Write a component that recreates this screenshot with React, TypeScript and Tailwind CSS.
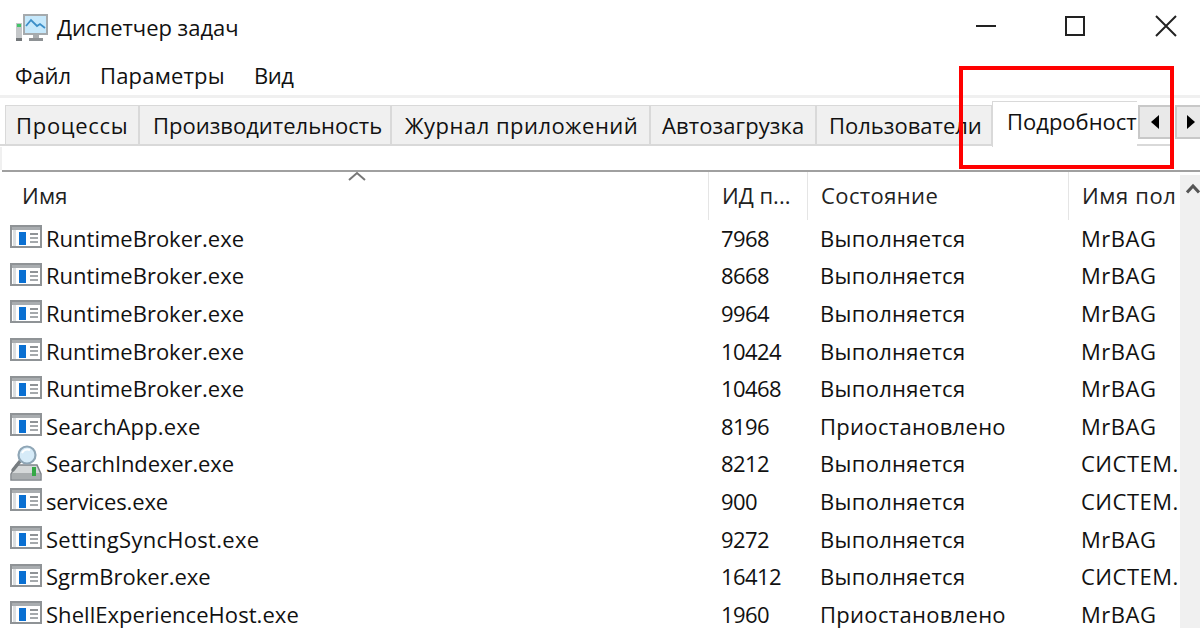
const font = { fontFamily: '"Open Sans", "Noto Sans", sans-serif' };

const rows: [string, string, string, string, string, boolean?][] = [
  ["RuntimeBroker.exe", "tracking-[0px]", "7968", "Выполняется", "MrBAG"],
  ["RuntimeBroker.exe", "tracking-[0px]", "8668", "Выполняется", "MrBAG"],
  ["RuntimeBroker.exe", "tracking-[0px]", "9964", "Выполняется", "MrBAG"],
  ["RuntimeBroker.exe", "tracking-[0px]", "10424", "Выполняется", "MrBAG"],
  ["RuntimeBroker.exe", "tracking-[0px]", "10468", "Выполняется", "MrBAG"],
  ["SearchApp.exe", "tracking-[0.15px]", "8196", "Приостановлено", "MrBAG"],
  ["SearchIndexer.exe", "tracking-[-0.12px]", "8212", "Выполняется", "СИСТЕМ.", true],
  ["services.exe", "tracking-[-0.15px]", "900", "Выполняется", "СИСТЕМ."],
  ["SettingSyncHost.exe", "tracking-[0.28px]", "9272", "Выполняется", "MrBAG"],
  ["SgrmBroker.exe", "tracking-[0px]", "16412", "Выполняется", "СИСТЕМ."],
  ["ShellExperienceHost.exe", "tracking-[0.05px]", "1960", "Приостановлено", "MrBAG"],
];

const tabs: [string, string, string][] = [
  ["Процессы", "w-[134px] pl-[10px] tracking-[0.7px]", "p"],
  ["Производительность", "w-[252px] pl-[13px] tracking-[0px]", "q"],
  ["Журнал приложений", "w-[259px] pl-[13px] tracking-[0.5px]", "r"],
  ["Автозагрузка", "w-[166px] pl-[11px] tracking-[0.1px]", "s"],
  ["Пользователи", "w-[176px] pl-[12px] tracking-[0px]", "t"],
];

function ExeIcon() {
  return (
    <svg width="32" height="23" viewBox="0 0 32 23" className="shrink-0 -mt-[2px]">
      <rect x="1" y="1" width="30" height="21" fill="#fff" stroke="#8f9396" strokeWidth="2" />
      <rect x="2" y="2" width="28" height="3" fill="#a9adb0" />
      <rect x="3" y="5" width="3" height="16" fill="#dcdfe1" />
      <rect x="9" y="7" width="7" height="13" fill="#0a70d2" />
      <rect x="20" y="8" width="8" height="2" fill="#8f9396" />
      <rect x="20" y="12" width="8" height="2" fill="#a5a9ac" />
      <rect x="20" y="16" width="8" height="2" fill="#a5a9ac" />
    </svg>
  );
}

function IndexerIcon() {
  return (
    <svg width="32" height="36" viewBox="0 0 32 36" className="shrink-0">
      <path d="M1 29 L6 20 H27 L31 29 V35 H1 Z" fill="#d5d8d9" stroke="#80858a" strokeWidth="1.5" />
      <path d="M2 28 H30 V34 H2 Z" fill="#a9adaf" />
      <rect x="22" y="22" width="4" height="9" fill="#35a845" />
      <path d="M11 15 L3 25" stroke="#777c80" strokeWidth="3.5" strokeLinecap="round" />
      <circle cx="17" cy="10" r="8.5" fill="#d6ebf8" stroke="#8fa6b6" strokeWidth="2.2" />
      <path d="M12 8 A6 6 0 0 1 20 5" fill="none" stroke="#fff" strokeWidth="2" />
    </svg>
  );
}

function AppIcon() {
  return (
    <svg width="33" height="28" viewBox="0 0 33 28" className="shrink-0">
      <rect x="1" y="9" width="6" height="18" fill="#c4c7c9" />
      <rect x="2" y="10" width="4" height="3" fill="#45c46a" />
      <rect x="1" y="24" width="6" height="3" fill="#73777a" />
      <rect x="9" y="1" width="23" height="19" fill="#c6e8fb" stroke="#a5aaad" strokeWidth="2" />
      <path d="M11 12 L16 6 L22 12 L25 10 L30 14" fill="none" stroke="#3c8fc8" strokeWidth="1.8" />
      <rect x="18" y="21" width="6" height="3" fill="#a9adb0" />
      <rect x="14" y="24" width="14" height="3" fill="#8e9295" />
    </svg>
  );
}

export default function App() {
  return (
    <div className="relative w-[1200px] h-[628px] overflow-hidden bg-white text-[#111] text-[22px] leading-[30px]" style={font}>
      <div className="h-[55px] flex items-start">
        <div className="ml-[15px] mt-[14px]"><AppIcon /></div>
        <div className="ml-[9px] mt-[12px] tracking-[-0.02px]">Диспетчер задач</div>
        <div className="ml-auto flex items-start">
          <div className="w-[20px] h-[2px] bg-[#222] mt-[25px] mr-[69px]" />
          <div className="w-[20px] h-[20px] border-2 border-[#222] mt-[16px] mr-[70px]" />
          <svg width="22" height="22" viewBox="0 0 22 22" className="mt-[15px] mr-[23px]">
            <path d="M1 1 L21 21 M21 1 L1 21" stroke="#222" strokeWidth="2" />
          </svg>
        </div>
      </div>

      <div className="h-[40px] flex items-center pl-[15px] gap-[29px]">
        <span className="tracking-[-0.1px]">Файл</span>
        <span className="tracking-[0.2px]">Параметры</span>
        <span className="tracking-[-0.35px]">Вид</span>
      </div>
      <div className="h-[3px] bg-[#f0f0f0]" />

      <div className="relative h-[49px] flex items-start pl-[5px] pt-[7px]">
        {tabs.map(([t, w, k]) => (
          <div key={k} className={`${w} h-[40px] shrink-0 bg-[#f0f0f0] border border-[#d9d9d9] flex items-center whitespace-nowrap`}>
            {t}
          </div>
        ))}
        <div className="relative z-10 w-[145px] h-[46px] -mt-[4px] shrink-0 bg-white border-t border-l border-[#d9d9d9] pl-[14px] pt-[4px] overflow-hidden whitespace-nowrap">
          Подробности
        </div>
        <div className="w-[34px] h-[34px] ml-[1px] shrink-0 bg-[#e9e9e9] border-2 border-[#c8c8c8] flex items-center justify-center">
          <span className="w-0 h-0 border-y-[7px] border-y-transparent border-r-[8px] border-r-black" />
        </div>
        <div className="w-[30px] h-[34px] ml-[3px] shrink-0 bg-[#e9e9e9] border-2 border-r-0 border-[#c8c8c8] flex items-center justify-center">
          <span className="w-0 h-0 border-y-[7px] border-y-transparent border-l-[8px] border-l-black" />
        </div>
        <div className="absolute left-0 right-[28px] top-[46px] h-[2px] bg-[#d9d9d9]" />
      </div>

      <div className="h-[23px] border-l-2 border-[#f0f0f0]" />
      <div className="h-[2px] ml-[2px] bg-[#a0a0a0]" />

      <div className="flex">
        <div className="w-[1180px] shrink-0">
          <div className="relative h-[48px] flex text-[#222]">
            <svg width="18" height="10" viewBox="0 0 18 10" className="absolute left-[348px] top-[-1px]">
              <path d="M1 9 L9 2 L17 9" fill="none" stroke="#777" strokeWidth="2" />
            </svg>
            <div className="w-[709px] border-r border-[#e5e5e5] pl-[22px] pt-[8px] tracking-[0.25px]">Имя</div>
            <div className="w-[99px] border-r border-[#e5e5e5] pl-[13px] pt-[8px] whitespace-nowrap">ИД п...</div>
            <div className="w-[261px] border-r border-[#e5e5e5] pl-[13px] pt-[8px] tracking-[0.4px]">Состояние</div>
            <div className="flex-1 pl-[13px] pt-[8px] whitespace-nowrap tracking-[0.6px]">Имя пол</div>
          </div>
          {rows.map(([name, nameTrack, id, state, user, idx], i) => (
            <div key={i} className="h-[37.6px] flex items-center whitespace-nowrap -translate-y-[1px]">
              <div className="w-[708px] pl-[10px] flex items-center">
                <div className="w-[36px] shrink-0 flex items-center">{idx ? <IndexerIcon /> : <ExeIcon />}</div>
                <span className={nameTrack}>{name}</span>
              </div>
              <div className="w-[99px] pl-[13px] tracking-[-0.6px]">{id}</div>
              <div className="w-[261px] pl-[13px] tracking-[0.3px]">{state}</div>
              <div className="flex-1 pl-[13px] tracking-[0.5px]">{user}</div>
            </div>
          ))}
        </div>
        <div className="w-[20px] mt-[3px] h-[453px] bg-[#f0f0f0] flex justify-end pt-[8px]">
          <svg width="14" height="11" viewBox="0 0 14 11">
            <path d="M1 9.5 L7 3 L13 9.5" fill="none" stroke="#555" strokeWidth="3" />
          </svg>
        </div>
      </div>

      <div className="absolute left-[959px] top-[66px] w-[215px] h-[103px] border-[4px] border-[#f00] z-20" />
    </div>
  );
}
